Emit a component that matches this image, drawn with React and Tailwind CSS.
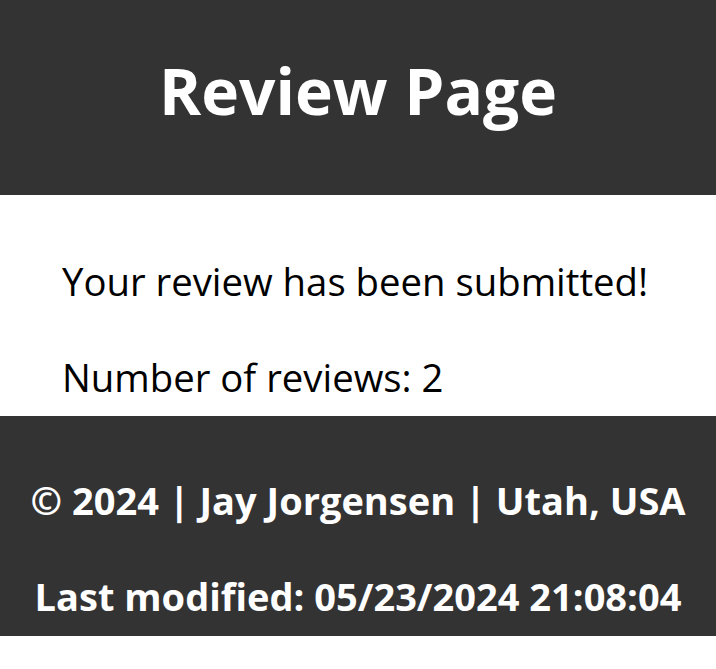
export default function App() {
  return (
    <div className="min-h-screen bg-white font-['Open_Sans',sans-serif]">
      <header className="bg-[#333333] h-[195px] pt-[43px] text-center">
        <h1 className="text-[64px] font-bold text-white leading-normal">Review Page</h1>
      </header>

      <main className="h-[221px] pt-[58px] pl-[62px] text-black text-[38.3px]">
        <p className="leading-normal">Your review has been submitted!</p>
        <p className="leading-normal mt-[39px]">Number of reviews: 2</p>
      </main>

      <footer className="bg-[#333333] h-[220px] pt-[56px] text-center text-white font-bold text-[38px]">
        <p className="leading-normal">© 2024 | Jay Jorgensen | Utah, USA</p>
        <p className="leading-normal mt-[39px]">Last modified: 05/23/2024 21:08:04</p>
      </footer>
    </div>
  );
}
